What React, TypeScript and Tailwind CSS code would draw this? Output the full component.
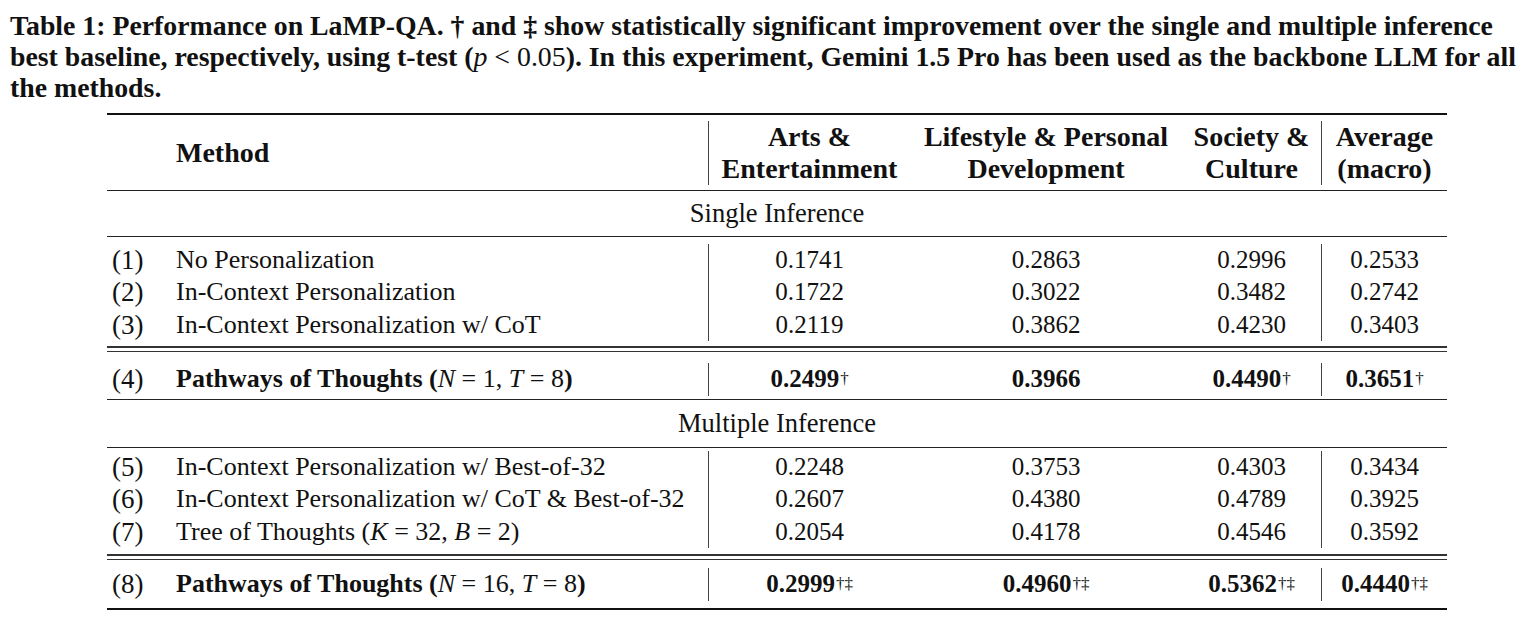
const cols = 'grid grid-cols-[69px_532px_202px_272px_139px_126px]'
const serif = { fontFamily: '"Liberation Serif", "DejaVu Serif", serif' }

type Val = { v: string; mark?: string }

interface RowProps {
  num: string
  method: React.ReactNode
  vals: Val[]
  bold?: boolean
}

function Row({ num, method, vals, bold = false }: RowProps) {
  const numCls = bold ? 'font-bold' : ''
  return (
    <div className={`${cols} leading-[32.5px]`}>
      <div className="pl-[5px] text-[27px]">{num}</div>
      <div className={`text-[26px] whitespace-nowrap ${bold ? 'font-bold' : ''}`}>{method}</div>
      {vals.map((c, i) => (
        <div
          key={i}
          className={`text-center text-[25px] ${numCls} ${i === 0 || i === 3 ? 'border-l border-[#444]' : ''}`}
        >
          {c.v}
          {c.mark && <sup className="text-[17px] font-normal ml-[1px] relative -top-[3px]">{c.mark}</sup>}
        </div>
      ))}
    </div>
  )
}

function Rule({ thick = false }: { thick?: boolean }) {
  return <div className={`${thick ? 'h-[2px] bg-[#111]' : 'h-px bg-[#222]'}`} />
}

function DoubleRule() {
  return (
    <div className="flex flex-col gap-[3px]">
      <div className="h-[1.5px] bg-[#333]" />
      <div className="h-[1.5px] bg-[#333]" />
    </div>
  )
}

function GroupTitle({ children }: { children: React.ReactNode }) {
  return <div className="h-[45px] flex items-center justify-center text-[26.5px]">{children}</div>
}

const M = ({ children }: { children: React.ReactNode }) => <i className="font-normal">{children}</i>
const Nw = ({ children }: { children: React.ReactNode }) => <span className="font-normal">{children}</span>

export default function App() {
  return (
    <div className="bg-white text-[#111] w-[1536px] h-[634px] overflow-hidden" style={serif}>
      {/* Caption */}
      <div className="pt-[10px] pl-[10px] font-bold text-[27.8px] leading-[31px] whitespace-nowrap">
        <div>
          Table 1: Performance on LaMP-QA. † and ‡ show statistically significant improvement over the single and
          multiple inference
        </div>
        <div>
          best baseline, respectively, using t-test (<M>p</M> <Nw>&lt; 0.05</Nw>). In this experiment, Gemini 1.5 Pro
          has been used as the backbone LLM for all
        </div>
        <div>the methods.</div>
      </div>

      <div className="w-[1340px] ml-[107px] mt-[10px]">
        <Rule thick />
        {/* Header */}
        <div className={`${cols} pt-[6px] pb-[5px] font-bold text-[28px] leading-[32px]`}>
          <div />
          <div className="flex items-center">Method</div>
          <div className="border-l border-[#444] text-center">
            Arts &amp;
            <br />
            Entertainment
          </div>
          <div className="text-center">
            Lifestyle &amp; Personal
            <br />
            Development
          </div>
          <div className="text-center">
            Society &amp;
            <br />
            Culture
          </div>
          <div className="border-l border-[#444] text-center">
            Average
            <br />
            (macro)
          </div>
        </div>
        <Rule />
        <GroupTitle>Single Inference</GroupTitle>
        <Rule />
        <div className="pt-[6.5px] pb-[5px]">
          <Row num="(1)" method="No Personalization" vals={[{ v: '0.1741' }, { v: '0.2863' }, { v: '0.2996' }, { v: '0.2533' }]} />
          <Row num="(2)" method="In-Context Personalization" vals={[{ v: '0.1722' }, { v: '0.3022' }, { v: '0.3482' }, { v: '0.2742' }]} />
          <Row num="(3)" method="In-Context Personalization w/ CoT" vals={[{ v: '0.2119' }, { v: '0.3862' }, { v: '0.4230' }, { v: '0.3403' }]} />
        </div>
        <DoubleRule />
        <div className="pt-[11px] pb-[3px]">
          <Row
            bold
            num="(4)"
            method={
              <>
                Pathways of Thoughts (<M>N</M>
                <Nw> = 1, </Nw>
                <M>T</M>
                <Nw> = 8</Nw>)
              </>
            }
            vals={[{ v: '0.2499', mark: '†' }, { v: '0.3966' }, { v: '0.4490', mark: '†' }, { v: '0.3651', mark: '†' }]}
          />
        </div>
        <Rule />
        <div className="pt-[2px]">
          <GroupTitle>Multiple Inference</GroupTitle>
        </div>
        <Rule />
        <div className="pt-[3px] pb-[6px]">
          <Row num="(5)" method="In-Context Personalization w/ Best-of-32" vals={[{ v: '0.2248' }, { v: '0.3753' }, { v: '0.4303' }, { v: '0.3434' }]} />
          <Row num="(6)" method="In-Context Personalization w/ CoT & Best-of-32" vals={[{ v: '0.2607' }, { v: '0.4380' }, { v: '0.4789' }, { v: '0.3925' }]} />
          <Row
            num="(7)"
            method={
              <>
                Tree of Thoughts (<M>K</M> = 32, <M>B</M> = 2)
              </>
            }
            vals={[{ v: '0.2054' }, { v: '0.4178' }, { v: '0.4546' }, { v: '0.3592' }]}
          />
        </div>
        <DoubleRule />
        <div className="pt-[8px] pb-[7px]">
          <Row
            bold
            num="(8)"
            method={
              <>
                Pathways of Thoughts (<M>N</M>
                <Nw> = 16, </Nw>
                <M>T</M>
                <Nw> = 8</Nw>)
              </>
            }
            vals={[
              { v: '0.2999', mark: '†‡' },
              { v: '0.4960', mark: '†‡' },
              { v: '0.5362', mark: '†‡' },
              { v: '0.4440', mark: '†‡' },
            ]}
          />
        </div>
        <Rule thick />
      </div>
    </div>
  )
}
